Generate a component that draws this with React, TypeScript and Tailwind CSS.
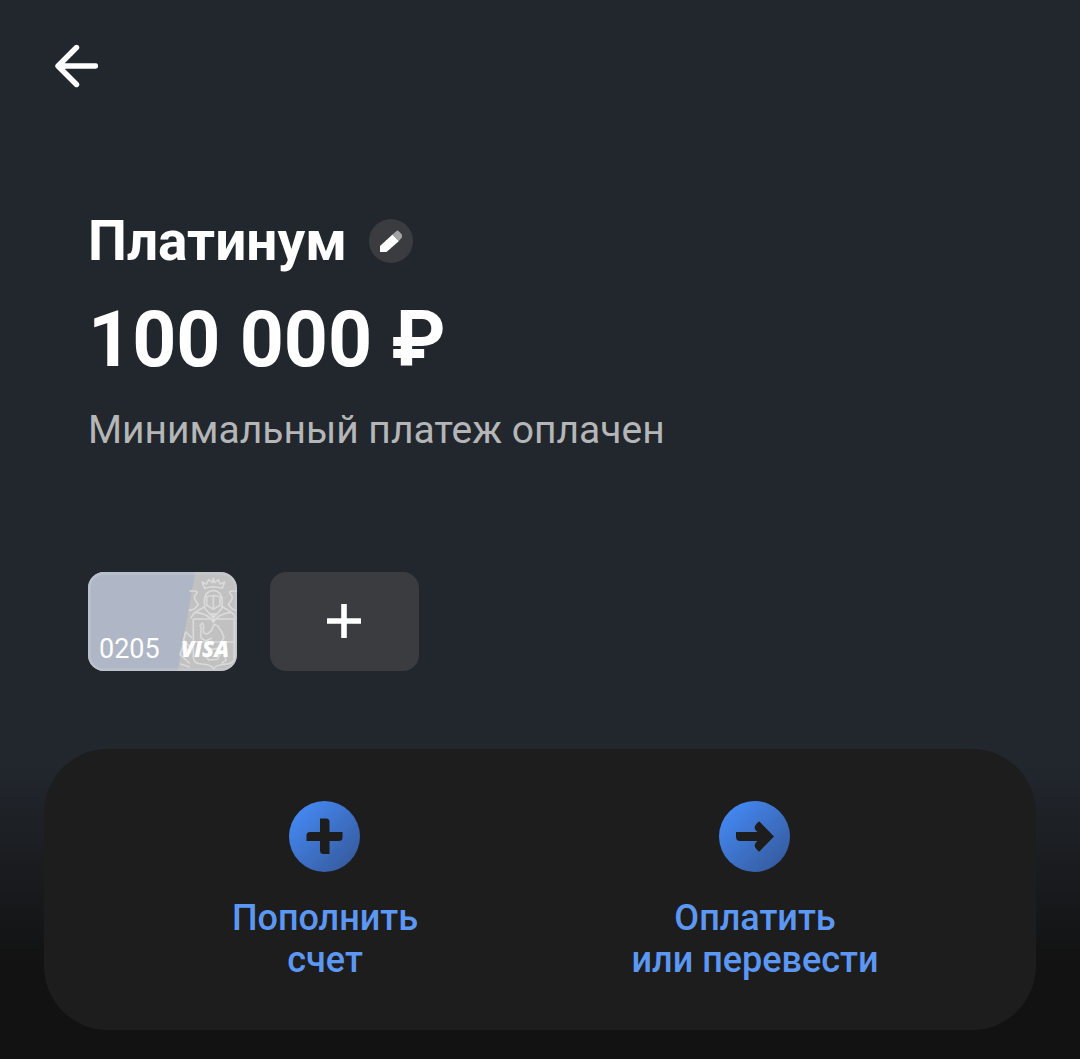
import type { ReactNode } from "react";

function BackIcon() {
  return (
    <svg viewBox="0 0 44 44" className="h-11 w-11" fill="none" stroke="white" strokeWidth="5.4" strokeLinecap="round" strokeLinejoin="round" aria-hidden="true">
      <path d="M22.5 3.5 4 22l18.5 18.5M5 22h36.5" />
    </svg>
  );
}

function PencilIcon() {
  return (
    <svg viewBox="0 0 44 44" className="h-11 w-11" aria-hidden="true">
      <path d="M11 33v-6L23.5 15.5l6.5 6.5L17.5 33Z" fill="white" />
      <path d="m23.5 15.5 4-3.6q1-.8 2 .1l3 3q1 1.1.4 3.4L30 22Z" fill="#a3a4a6" />
    </svg>
  );
}

function CardArt() {
  return (
    <svg viewBox="24 36 447 297" className="absolute inset-0 h-full w-full" fill="none" aria-hidden="true">
      <path d="M24 36H471V333H24Z" fill="#c1c1c1" />
      <path d="M24 36H346L293 333H24Z" fill="#afb6c5" />
      <g stroke="#dadada" strokeWidth="5" strokeLinejoin="round" strokeLinecap="round">
        <path d="m374 85-8-19 13 6 7-13 11 9 3-13 4 13 11-9 5 13 14-6-8 19q-26-9-52 0Z" />
        <path d="M373 124q0-30 27-33q27 3 27 33l-2 22-25 28-25-28Z" />
        <path d="M380 111q20-9 40 0v25l-20 12-20-12ZM400 108v38" />
        <path d="m373 140-26 16q-10 7-14 18M427 140l26 16q10 7 14 18M346 157q38 3 54 29q16-26 54-29" />
        <path d="M330 93h14q9 0 6 7l-6 8q-2 6 3 14l8 12-12 13-15 4M470 93h-14q-9 0-6 7l6 8q2 6-3 14l-8 12 12 13 12 4" />
        <path d="M340 177h48q12 0 12 10q0-10 12-10h51v114q0 20-24 21-34 3-38 15-5-13-36-15-25-1-25-21Z" />
        <path d="M340 246h122M334 232l-17-16-6 24 21 23M332 277l-23-19-9 25 28 26M328 321l-26-9" />
        <path d="m362 222 2-18-4-7 7-8 4 9-1 20 12 4 12-10 8-19 12 6 12 18 6 16-8 12M362 222l2 13 14 8 16-8M376 258l18 10 22-3 14-9 10 14-7 14 5 17-12 8M374 284l12 16 26-2 8-14" />
      </g>
      <path d="M391 162h18M400 162v19M397 181h6" stroke="#e0e0e0" strokeWidth="4" />
      <rect x="28" y="40" width="439" height="289" rx="44" stroke="#ccd0d6" strokeOpacity=".4" strokeWidth="8" />
    </svg>
  );
}

function Action({ icon, first, second }: { icon: ReactNode; first: string; second: string }) {
  return (
    <button type="button" className="flex flex-1 flex-col items-center gap-6 text-center text-4xl leading-[42px] font-medium text-[#5c98f3]">
      <svg viewBox="0 0 72 72" className="h-[72px] w-[72px]" aria-hidden="true">
        <defs>
          <linearGradient id="disc" x1="0.1" y1="0.1" x2="0.9" y2="0.9">
            <stop offset="0" stopColor="#4489f4" />
            <stop offset="1" stopColor="#365b9e" />
          </linearGradient>
        </defs>
        <circle cx="35.5" cy="35.5" r="35.5" fill="url(#disc)" />
        {icon}
      </svg>
      <span>
        {first}
        <br />
        {second}
      </span>
    </button>
  );
}

export default function App() {
  return (
    <main className="flex min-h-screen flex-col bg-[#121212] font-['Roboto',sans-serif] text-white">
      <section className="bg-[#22272e] pb-[78px]">
        <header className="px-[54px] pt-11">
          <button type="button" aria-label="Назад" className="block">
            <BackIcon />
          </button>
        </header>

        <div className="px-[88px] pt-[121px]">
          <div className="flex items-center gap-[22px]">
            <h1 className="text-[55px] leading-[64px] font-bold">Платинум</h1>
            <button type="button" aria-label="Изменить название" className="rounded-full bg-[#3a3c40]">
              <PencilIcon />
            </button>
          </div>
          <p className="mt-[21px] text-[77px] leading-[92px] font-bold">100 000 ₽</p>
          <p className="mt-[19px] text-[39px] leading-[50px] text-[#b5b6b8]">Минимальный платеж оплачен</p>

          <div className="mt-[117px] flex gap-[33px]">
            <button type="button" className="relative flex h-[99px] w-[149px] items-end justify-between overflow-hidden rounded-2xl pr-2 pb-2 pl-[11px]">
              <CardArt />
              <span className="relative text-[27px] leading-7">0205</span>
              <span className="relative font-['Open_Sans',sans-serif] text-[22px] leading-[30px] font-extrabold italic">VISA</span>
            </button>
            <button type="button" aria-label="Добавить карту" className="flex h-[99px] w-[149px] items-center justify-center rounded-2xl bg-[#3a3c40]">
              <svg viewBox="0 0 35 35" className="h-[35px] w-[35px]" stroke="white" strokeWidth="5.6" aria-hidden="true">
                <path d="M17 0v34M0 17h34" />
              </svg>
            </button>
          </div>
        </div>
      </section>

      <section className="bg-linear-to-b from-[#22272e] from-5% to-[#121212] to-70% px-11 pb-[29px]">
        <div className="flex rounded-[64px] bg-[#1d1d1e] px-[66px] pt-[52px] pb-[49px]">
          <Action
            first="Пополнить"
            second="счет"
            icon={
              <path
                d="M31 17.5H37q3.500 0 3.500 3.500V31H53.500V36.500q0 3.500-3.500 3.500H40.500V53H34.500q-3.500 0-3.500-3.500V40H17.500V34.500q0-3.500 3.500-3.500H31Z"
                fill="#1d1d1e"
              />
            }
          />
          <Action
            first="Оплатить"
            second="или перевести"
            icon={
              <path
                d="M17 31H38.500l-2-2q-2-3 .8-6l2.200-2.200q.6-.6 1.200 0L55 35.500 40.700 50.200q-.6.6-1.200 0L37.300 48q-2.800-3-.8-6l2-2H21q-4 0-4-4Z"
                fill="#1d1d1e"
              />
            }
          />
        </div>
      </section>
    </main>
  );
}
